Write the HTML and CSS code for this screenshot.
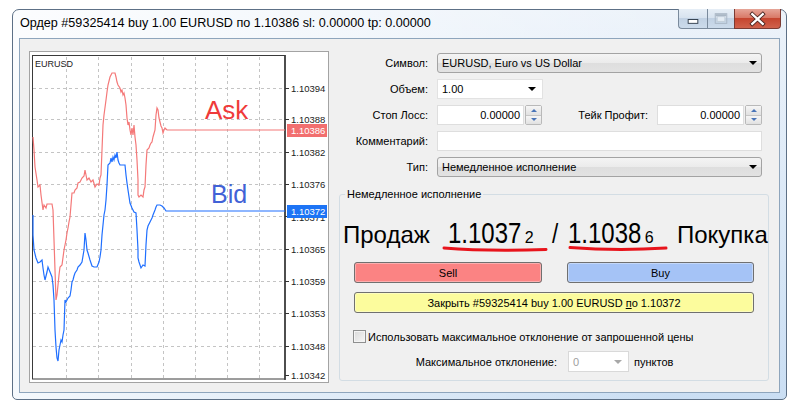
FILE: index.html
```html
<!DOCTYPE html>
<html lang="ru">
<head>
<meta charset="utf-8">
<title>Ордер</title>
<link rel="stylesheet" href="styles.css">
</head>
<body>
<div class="window">
  <div class="titlebar">
    <span class="title">Ордер #59325414 buy 1.00 EURUSD по 1.10386 sl: 0.00000 tp: 0.00000</span>
    <div class="wbtns">
      <div class="wb wb-min"><svg width="29" height="20" viewBox="0 0 29 20"><rect x="9.5" y="10.5" width="10" height="4" fill="#fff" stroke="#34414f"/></svg></div>
      <div class="wb wb-max"><svg width="27" height="20" viewBox="0 0 27 20"><rect x="7.5" y="4.5" width="12" height="10" fill="none" stroke="#a9b6c4"/><rect x="8" y="5" width="11" height="2" fill="#a9b6c4"/><rect x="9.5" y="7.5" width="8" height="5" fill="#e4ecf4" stroke="#c3ced9"/></svg></div>
      <div class="wb wb-close"><svg width="47" height="20" viewBox="0 0 47 20"><path d="M18 5 L29 15 M29 5 L18 15" stroke="#4a2520" stroke-width="4.2" stroke-linecap="square"/><path d="M18 5 L29 15 M29 5 L18 15" stroke="#fff" stroke-width="2.4" stroke-linecap="square"/></svg></div>
    </div>
  </div>
  <div class="client">
    <div class="chart">
      <svg class="chart-svg" width="298" height="330" viewBox="30 52 298 330">
        <g stroke="#c4c4c4" stroke-width="1" stroke-dasharray="3 3" fill="none">
          <path d="M33 88.5H285 M33 119.5H285 M33 152.5H285 M33 184.5H285 M33 216.5H285 M33 249.5H285 M33 281.5H285 M33 313.5H285 M33 346.5H285"/>
          <path d="M66.5 57V378 M98.5 57V378 M131.5 57V378 M163.5 57V378 M195.5 57V378 M227.5 57V378 M259.5 57V378"/>
        </g>
        <rect x="32.5" y="55.5" width="252.5" height="323.5" fill="none" stroke="#3a3a3a" stroke-width="1"/>
        <line x1="285" y1="55" x2="285" y2="380" stroke="#3a3a3a" stroke-width="1.6"/>
        <g stroke="#333" stroke-width="1">
          <path d="M285 88.5H289 M285 119.5H289 M285 152.5H289 M285 184.5H289 M285 216.5H289 M285 249.5H289 M285 281.5H289 M285 313.5H289 M285 346.5H289 M285 375.5H289"/>
        </g>
        <text class="sym" x="35" y="67">EURUSD</text>
        <polyline fill="none" stroke="#f47979" stroke-width="1.2" points="33,137 34,150 35,167 37,180 38,187 40,185 41,195 43,210 44,205 46,208 47,204 52,204 53,210 54,240 55,270 56,300 57,295 58,285 59,275 60,267 62,265 64,250 66,240 67,233 68,228 69,222 70,217 71,205 72,193 74,193 75,190 77,188 78,183 80,182 82,178 84,176 85,170 86,175 87,180 89,178 91,182 93,180 95,187 97,184 99,185 100,178 101,175 102,150 103,125 104,115 106,100 107,92 108,85 110,77 112,73 115,73 116,77 117,82 118,85 120,88 121,92 122,90 123,95 124,93 125,98 126,105 127,118 128,125 129,122 130,130 131,135 132,128 133,135 134,125 135,137 136,145 137,160 138,180 138,195 139,197 141,195 143,197 144,190 145,187 146,165 147,150 149,148 150,145 151,143 152,142 153,137 155,130 156,115 157,108 158,110 159,118 160,122 161,126 162,128 163,133 164,130 165,128 167,130 285,130"/>
        <polyline fill="none" stroke="#1f6fff" stroke-width="1.2" points="33,215 33,235 34,250 36,258 38,263 40,262 42,260 43,268 44,275 45,280 47,272 48,267 50,272 52,277 53,285 54,300 55,330 56,347 57,358 58,361 59,350 60,345 61,340 62,342 63,335 64,330 65,300 66,302 68,298 70,296 71,290 72,282 73,280 74,276 75,273 77,270 78,267 80,265 82,262 84,250 85,233 86,240 87,250 88,253 90,260 92,266 94,267 97,267 99,262 100,257 101,250 102,235 103,225 104,215 105,210 106,200 107,185 108,165 110,163 111,158 112,162 113,157 114,160 115,155 116,158 117,152 118,160 119,163 120,165 122,165 125,165 126,175 127,183 128,190 130,203 132,208 134,212 136,213 137,230 138,250 138,258 139,262 141,268 143,265 145,266 146,245 147,230 148,226 150,222 151,220 152,218 153,215 155,210 156,207 157,205 160,205 162,206 164,208 166,211 285,211"/>
        <text class="ann ask" x="205" y="119">Ask</text>
        <text class="ann bid" x="211" y="203">Bid</text>
        <g class="scale">
          <text x="291" y="92">1.10394</text>
          <text x="291" y="123">1.10388</text>
          <text x="291" y="156">1.10382</text>
          <text x="291" y="188">1.10376</text>
          <text x="291" y="221">1.10371</text>
          <text x="291" y="253">1.10365</text>
          <text x="291" y="285">1.10359</text>
          <text x="291" y="317">1.10353</text>
          <text x="291" y="350">1.10348</text>
          <text x="291" y="379">1.10342</text>
        </g>
        <rect x="287" y="124" width="40" height="13" fill="#f26f6f"/>
        <text class="scale-w" x="291" y="134">1.10386</text>
        <rect x="287" y="205" width="40" height="13" fill="#1d74f5"/>
        <text class="scale-w" x="291" y="215">1.10372</text>
      </svg>
    </div>
    <div class="panel">
      <div class="form">
        <span class="lbl">Символ:</span>
        <div class="combo"><span>EURUSD, Euro vs US Dollar</span><i class="arrow"></i></div>
        <span class="lbl">Объем:</span>
        <div class="vol"><span>1.00</span><i class="arrow"></i></div>
        <span class="lbl">Стоп Лосс:</span>
        <div class="sltp">
          <div class="spinfield">
            <div class="num">0.00000</div>
            <div class="spin"><span class="up"><i></i></span><span class="down"><i></i></span></div>
          </div>
          <span class="tp-lbl">Тейк Профит:</span>
          <div class="spinfield">
            <div class="num">0.00000</div>
            <div class="spin"><span class="up"><i></i></span><span class="down"><i></i></span></div>
          </div>
        </div>
        <span class="lbl">Комментарий:</span>
        <div class="text-in"></div>
        <span class="lbl">Тип:</span>
        <div class="combo"><span>Немедленное исполнение</span><i class="arrow"></i></div>
      </div>
      <fieldset class="group">
        <legend>Немедленное исполнение</legend>
        <div class="prices">
          <span class="side side-sell">Продаж</span>
          <span class="price p1"><span class="big">1.1037</span><span class="small">2</span>
            <svg class="uline" width="110" height="8" viewBox="0 0 110 8"><path d="M2 3 Q45 6.5 104 4.5" fill="none" stroke="#e8141c" stroke-width="3" stroke-linecap="round"/></svg>
          </span>
          <span class="slash">/</span>
          <span class="price p2"><span class="big">1.1038</span><span class="small">6</span>
            <svg class="uline" width="104" height="8" viewBox="0 0 104 8"><path d="M3 2.5 Q50 6 99 3" fill="none" stroke="#e8141c" stroke-width="3" stroke-linecap="round"/></svg>
          </span>
          <span class="side side-buy">Покупка</span>
        </div>
        <div class="trade">
          <div class="btn sell"><span>Sell</span></div>
          <div class="btn buy"><span>Buy</span></div>
        </div>
        <div class="btn closebtn"><span>Закрыть #59325414 buy 1.00 EURUSD <u>п</u>о 1.10372</span></div>
        <div class="check-row"><span class="check"></span><span>Использовать максимальное отклонение от запрошенной цены</span></div>
        <div class="dev-row">
          <span class="dev-lbl">Максимальное отклонение:</span>
          <div class="dev-combo"><span>0</span><i class="arrow grey"></i></div>
          <span class="units">пунктов</span>
        </div>
      </fieldset>
    </div>
  </div>
</div>
</body>
</html>
```
FILE: styles.css
```css
* { box-sizing: border-box; }
html, body { margin: 0; padding: 0; background: #fff; }
body { font-family: "Liberation Sans", Arial, sans-serif; font-size: 11px; color: #000; }

.window {
  margin: 9px 0 0 12px;
  width: 775px;
  height: 391px;
  border: 1px solid #5d7086;
  border-radius: 7px 7px 5px 5px;
  background:
    linear-gradient(90deg, rgba(255,255,255,.85), rgba(255,255,255,.2) 85%),
    linear-gradient(180deg, #e8f0f9, #bdd6f0);
  padding: 0 6px 6px;
  display: flex;
  flex-direction: column;
}
.titlebar { height: 28px; display: flex; align-items: flex-start; flex: none; }
.title { font-size: 12.6px; line-height: 14px; margin-top: 6px; padding-left: 1px; white-space: nowrap; color: #000; }
.wbtns { margin-left: auto; margin-top: -1px; margin-right: -1px; display: flex; height: 20px; }
.wb { height: 20px; border: 1px solid #7a8a9c; border-top: none; display: flex; }
.wb svg { display: block; }
.wb-min { width: 29px; border-radius: 0 0 0 4px; border-right: none;
  background: linear-gradient(180deg, #e6eef6 0, #d8e3ef 45%, #c1d1e3 50%, #ccdbeb 100%); }
.wb-max { width: 27px; border-right: none;
  background: linear-gradient(180deg, #e6eef6 0, #d8e3ef 45%, #c1d1e3 50%, #ccdbeb 100%); }
.wb-close { width: 47px; border-radius: 0 0 4px 0; border-color: #7b3b33;
  background: linear-gradient(180deg, #e6a598 0, #d97a68 45%, #c5452f 50%, #d0624c 100%); }

.client {
  flex: 1;
  background: #f0f0f0;
  border: 1px solid #8ea5bc;
  display: flex;
  padding: 12px 9px 0 9px;
  gap: 10px;
}
.chart { width: 300px; height: 332px; border: 1px solid #a3a3a3; background: #fff; flex: none; }
.chart-svg { display: block; }
.sym { font-family: "Liberation Sans", Arial, sans-serif; font-size: 9px; fill: #222; }
.ann { font-family: "Liberation Sans", Arial, sans-serif; }
.ask { font-size: 26px; fill: #ef3a3a; }
.bid { font-size: 25px; fill: #4262d6; }
.scale text, .scale-w { font-family: "Liberation Sans", Arial, sans-serif; font-size: 9.5px; }
.scale text { fill: #1c1c1c; }
.scale-w { fill: #fff; }

.panel { width: 430px; display: flex; flex-direction: column; }
.form {
  display: grid;
  grid-template-columns: 89px 325px;
  grid-auto-rows: 20px;
  column-gap: 9px;
  row-gap: 6px;
  margin-top: 2px;
}
.lbl { text-align: right; line-height: 20px; white-space: nowrap; }
.arrow {
  margin-left: auto;
  width: 0; height: 0;
  border-left: 4px solid transparent;
  border-right: 4px solid transparent;
  border-top: 4px solid #000;
}
.arrow.grey { border-top-color: #a8a8a8; }
.combo {
  height: 20px;
  border: 1px solid #a3a3a3;
  border-radius: 3px;
  background: linear-gradient(180deg, #f4f4f4 0, #ebebeb 50%, #dedede 51%, #e2e2e2 100%);
  display: flex;
  align-items: center;
  padding: 0 4px 0 4px;
  white-space: nowrap;
}
.vol {
  width: 106px; height: 20px;
  background: #fff;
  border: 1px solid #e2e2e2;
  display: flex; align-items: center;
  padding: 0 6px 0 4px;
}
.sltp { display: flex; align-items: center; height: 20px; }
.spinfield { width: 105px; height: 20px; display: flex; flex: none; }
.num {
  flex: 1;
  background: #fff;
  border: 1px solid #dedede;
  text-align: right;
  padding-right: 3px;
  line-height: 18px;
}
.spin { width: 17px; margin-left: 1px; display: flex; flex-direction: column; border: 1px solid #b9b9b9; border-radius: 2px; }
.spin span {
  flex: 1;
  display: flex; align-items: center; justify-content: center;
  background: linear-gradient(180deg, #f6f6f6, #e1e1e1);
}
.spin .up { border-bottom: 1px solid #c6c6c6; }
.spin i { width: 0; height: 0; border-left: 3.5px solid transparent; border-right: 3.5px solid transparent; }
.spin .up i { border-bottom: 3.5px solid #4a75b8; }
.spin .down i { border-top: 3.5px solid #4a75b8; }
.tp-lbl { flex: 1; text-align: right; margin-right: 9px; white-space: nowrap; }
.text-in { height: 20px; background: #fff; border: 1px solid #dedede; }

.group {
  margin: 11px 0 0 0;
  padding: 0 0 8px 0;
  border: 1px solid #d3dde4;
  border-radius: 3px;
  min-width: 0;
}
.group legend { padding: 0 2px; margin-left: 5px; font-size: 11px; line-height: 13px; }
.prices { display: flex; align-items: baseline; height: 34px; margin-top: 15px; line-height: 34px; white-space: nowrap; }
.side { font-size: 24px; }
.side-sell { width: 105px; padding-left: 3px; flex: none; }
.side-buy { padding-left: 5px; }
.price { position: relative; flex: none; padding-left: 3px; }
.p1 { width: 100px; }
.p2 { width: 107px; }
.big {
  display: inline-block;
  font-size: 30px;
  transform: scaleX(.8);
  transform-origin: 0 50%;
  margin-right: -18px;
}
.small { font-size: 16px; margin-left: 3px; }
.slash { width: 20px; flex: none; text-align: center; font-size: 28px; display: inline-block; transform: scaleX(.8); }
.uline { position: absolute; left: -3px; top: 29px; }
.p2 .uline { left: 2px; }

.trade { display: flex; margin: 12px 0 0 14px; }
.btn {
  height: 21px;
  border: 1px solid #707070;
  border-radius: 3px;
  box-shadow: inset 0 0 0 1px rgba(255,255,255,.35);
  display: flex; align-items: center; justify-content: center;
  white-space: nowrap;
}
.sell { width: 188px; background: #fb8383; }
.buy { width: 187px; margin-left: 25px; background: #a5c3f6; }
.closebtn { width: 400px; margin: 9px 0 0 14px; background: #fcfc9d; }
.closebtn u { text-decoration: underline; }
.check-row { display: flex; align-items: center; height: 13px; margin: 17px 0 0 13px; white-space: nowrap; }
.check {
  width: 13px; height: 13px; flex: none;
  border: 1px solid #8e8f8f;
  background: linear-gradient(135deg, #d9d9d9, #f7f7f7);
  box-shadow: inset 0 0 0 1px #f4f4f4;
  margin-right: 2px;
}
.dev-row { display: flex; align-items: center; height: 21px; margin-top: 8px; white-space: nowrap; }
.dev-lbl { width: 217px; text-align: right; flex: none; }
.dev-combo {
  width: 61px; height: 21px; margin-left: 11px;
  background: #fff; border: 1px solid #d9d9d9;
  display: flex; align-items: center; padding: 0 6px 0 4px;
  color: #a0a0a0;
}
.units { margin-left: 5px; }
```
